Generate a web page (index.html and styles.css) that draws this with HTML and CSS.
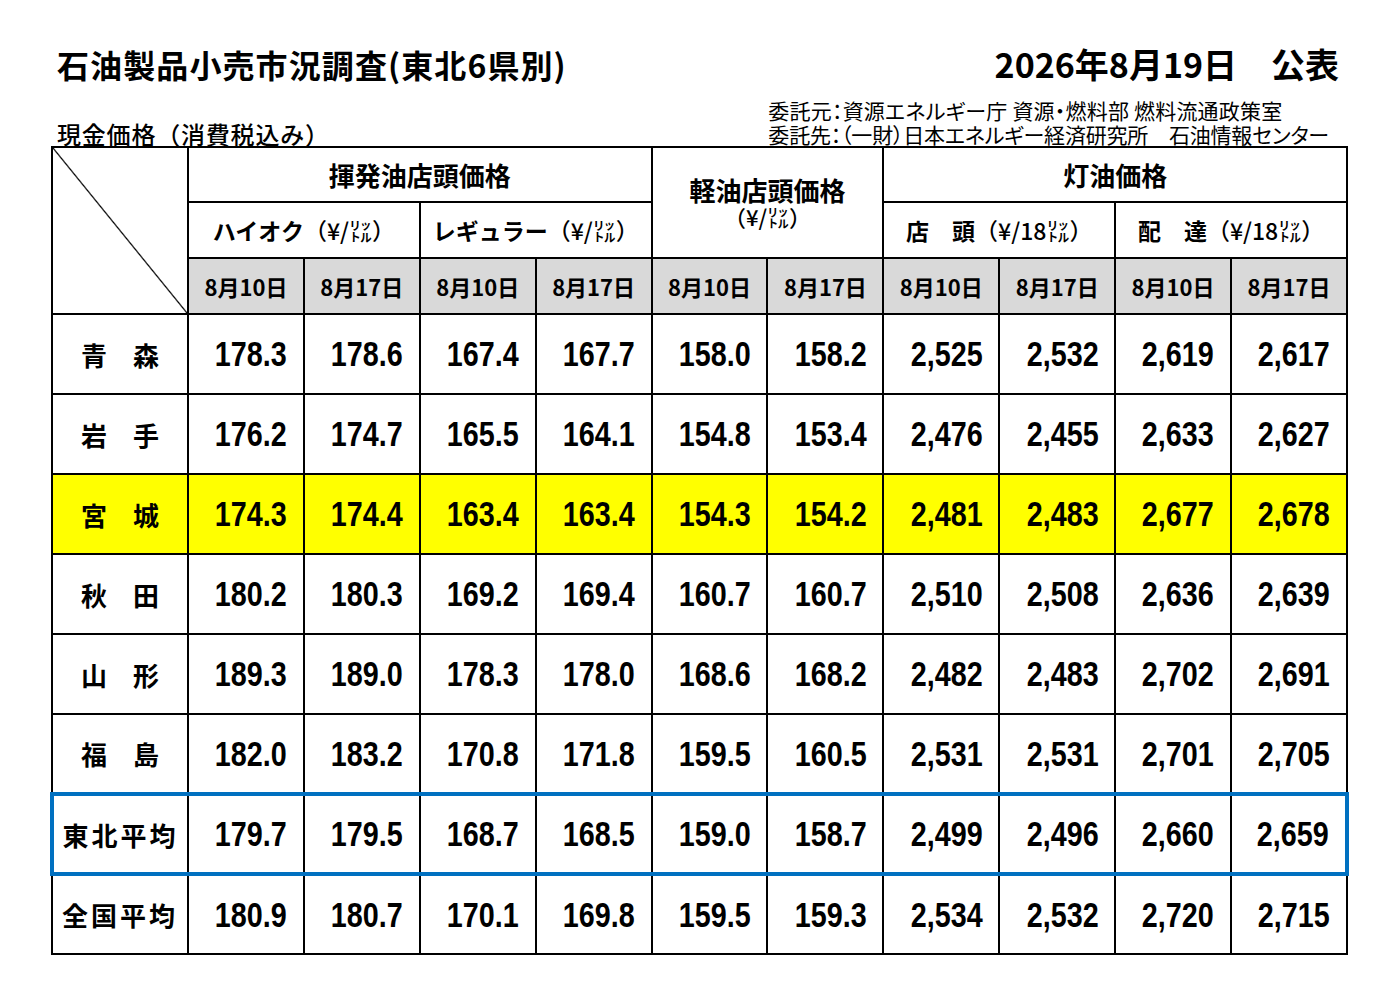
FILE: index.html
```html
<!DOCTYPE html>
<html lang="ja">
<head>
<meta charset="utf-8">
<title>石油製品小売市況調査(東北6県別)</title>
<link rel="stylesheet" href="styles.css">
</head>
<body>
<div class="page">
  <div class="top">
    <h1 class="title">石油製品小売市況調査(東北6県別)</h1>
    <div class="date">2026年8月19日　公表</div>
  </div>
  <div class="sub">
    <div class="cash">現金価格（消費税込み）</div>
    <div class="notes">
      <div class="l1">委託元：資源エネルギー庁 資源・燃料部 燃料流通政策室</div>
      <div class="l2">委託先：（一財）日本エネルギー経済研究所　石油情報センター</div>
    </div>
  </div>
  <table class="prices">
    <colgroup>
      <col class="c-name">
      <col><col><col><col><col><col><col><col><col><col>
    </colgroup>
    <thead>
      <tr class="h1">
        <th rowspan="3" class="corner"></th>
        <th colspan="4">揮発油店頭価格</th>
        <th colspan="2" rowspan="2" class="diesel"><span class="dl">軽油店頭価格</span><span class="unit du">（¥/㍑）</span></th>
        <th colspan="4">灯油価格</th>
      </tr>
      <tr class="h2">
        <th colspan="2">ハイオク<span class="unit">（¥/㍑）</span></th>
        <th colspan="2">レギュラー<span class="unit">（¥/㍑）</span></th>
        <th colspan="2">店　頭<span class="unit">（¥/18㍑）</span></th>
        <th colspan="2">配　達<span class="unit">（¥/18㍑）</span></th>
      </tr>
      <tr class="h3">
        <th>8月10日</th><th>8月17日</th><th>8月10日</th><th>8月17日</th><th>8月10日</th>
        <th>8月17日</th><th>8月10日</th><th>8月17日</th><th>8月10日</th><th>8月17日</th>
      </tr>
    </thead>
    <tbody>
      <tr>
        <th class="pref">青　森</th>
        <td><span class="n">178.3</span></td><td><span class="n">178.6</span></td><td><span class="n">167.4</span></td><td><span class="n">167.7</span></td><td><span class="n">158.0</span></td><td><span class="n">158.2</span></td><td><span class="n">2,525</span></td><td><span class="n">2,532</span></td><td><span class="n">2,619</span></td><td><span class="n">2,617</span></td>
      </tr>
      <tr>
        <th class="pref">岩　手</th>
        <td><span class="n">176.2</span></td><td><span class="n">174.7</span></td><td><span class="n">165.5</span></td><td><span class="n">164.1</span></td><td><span class="n">154.8</span></td><td><span class="n">153.4</span></td><td><span class="n">2,476</span></td><td><span class="n">2,455</span></td><td><span class="n">2,633</span></td><td><span class="n">2,627</span></td>
      </tr>
      <tr class="hl">
        <th class="pref">宮　城</th>
        <td><span class="n">174.3</span></td><td><span class="n">174.4</span></td><td><span class="n">163.4</span></td><td><span class="n">163.4</span></td><td><span class="n">154.3</span></td><td><span class="n">154.2</span></td><td><span class="n">2,481</span></td><td><span class="n">2,483</span></td><td><span class="n">2,677</span></td><td><span class="n">2,678</span></td>
      </tr>
      <tr>
        <th class="pref">秋　田</th>
        <td><span class="n">180.2</span></td><td><span class="n">180.3</span></td><td><span class="n">169.2</span></td><td><span class="n">169.4</span></td><td><span class="n">160.7</span></td><td><span class="n">160.7</span></td><td><span class="n">2,510</span></td><td><span class="n">2,508</span></td><td><span class="n">2,636</span></td><td><span class="n">2,639</span></td>
      </tr>
      <tr>
        <th class="pref">山　形</th>
        <td><span class="n">189.3</span></td><td><span class="n">189.0</span></td><td><span class="n">178.3</span></td><td><span class="n">178.0</span></td><td><span class="n">168.6</span></td><td><span class="n">168.2</span></td><td><span class="n">2,482</span></td><td><span class="n">2,483</span></td><td><span class="n">2,702</span></td><td><span class="n">2,691</span></td>
      </tr>
      <tr>
        <th class="pref">福　島</th>
        <td><span class="n">182.0</span></td><td><span class="n">183.2</span></td><td><span class="n">170.8</span></td><td><span class="n">171.8</span></td><td><span class="n">159.5</span></td><td><span class="n">160.5</span></td><td><span class="n">2,531</span></td><td><span class="n">2,531</span></td><td><span class="n">2,701</span></td><td><span class="n">2,705</span></td>
      </tr>
      <tr class="avg">
        <th class="pref wide">東北平均</th>
        <td><span class="n">179.7</span></td><td><span class="n">179.5</span></td><td><span class="n">168.7</span></td><td><span class="n">168.5</span></td><td><span class="n">159.0</span></td><td><span class="n">158.7</span></td><td><span class="n">2,499</span></td><td><span class="n">2,496</span></td><td><span class="n">2,660</span></td><td><span class="n">2,659</span></td>
      </tr>
      <tr>
        <th class="pref wide">全国平均</th>
        <td><span class="n">180.9</span></td><td><span class="n">180.7</span></td><td><span class="n">170.1</span></td><td><span class="n">169.8</span></td><td><span class="n">159.5</span></td><td><span class="n">159.3</span></td><td><span class="n">2,534</span></td><td><span class="n">2,532</span></td><td><span class="n">2,720</span></td><td><span class="n">2,715</span></td>
      </tr>
    </tbody>
  </table>
</div>
</body>
</html>
```

FILE: styles.css
```css
html, body {
  margin: 0;
  padding: 0;
  background: #ffffff;
}

body {
  font-family: "Noto Sans CJK JP", "Noto Sans", sans-serif;
  color: #000000;
}

.page {
  width: 1299px;
  padding: 44px 50px 0 50px;
}

.top {
  display: flex;
  justify-content: space-between;
  align-items: center;
  height: 40px;
  padding: 0 10px 0 7px;
}

.title {
  margin: 0;
  font-size: 32px;
  font-weight: 700;
  line-height: 40px;
  letter-spacing: 1.1px;
}

.date {
  font-size: 34px;
  font-weight: 700;
  line-height: 40px;
}

.sub {
  display: flex;
  justify-content: space-between;
  align-items: flex-end;
  margin-top: 14px;
  padding: 0 20px 0 7px;
}

.cash {
  font-size: 24px;
  font-weight: 500;
  line-height: 24px;
  letter-spacing: 0.8px;
}

.notes {
  font-size: 21px;
  line-height: 24px;
  font-feature-settings: "palt";
}

.notes .l1 {
  letter-spacing: 0.2px;
}

.notes .l2 {
  letter-spacing: -0.2px;
}

.prices {
  width: 1299px;
  table-layout: fixed;
  border-collapse: collapse;
  border: 2px solid #000;
}

.c-name {
  width: 136px;
}

.prices th,
.prices td {
  border: 2px solid #000;
  padding: 0;
  vertical-align: middle;
}

.prices thead th {
  font-weight: 700;
  text-align: center;
}

.h1 {
  height: 55px;
}

.h1 th {
  font-size: 26px;
}

.h2 {
  height: 56px;
}

.h2 th {
  font-size: 23px;
}

.unit {
  font-weight: 500;
}

.diesel .dl,
.diesel .du {
  display: block;
}

.diesel .dl {
  line-height: 27px;
}

.diesel .du {
  font-size: 22px;
  line-height: 26px;
}

.h3 {
  height: 56px;
}

.h3 th {
  background: #d9d9d9;
  font-size: 22px;
}

.corner {
  background: linear-gradient(to top right, transparent calc(50% - 1.2px), #000 50%, transparent calc(50% + 1.2px));
}

.prices tbody tr {
  height: 80px;
}

.pref {
  font-size: 26px;
  font-weight: 700;
  text-align: center;
}

.pref.wide {
  letter-spacing: 3px;
}

.prices td {
  font-family: "Liberation Sans", Arial, sans-serif;
  font-size: 35px;
  font-weight: 700;
  text-align: right;
  padding-right: 16px;
}

.n {
  display: inline-block;
  transform: scaleX(0.82);
  transform-origin: right center;
}

.hl th,
.hl td {
  background: #ffff00;
}

.avg th,
.avg td {
  border-top: 4px solid #0070c0;
  border-bottom: 4px solid #0070c0;
}

.avg th:first-child {
  border-left: 4px solid #0070c0;
}

.avg td:last-child {
  border-right: 4px solid #0070c0;
}
```
